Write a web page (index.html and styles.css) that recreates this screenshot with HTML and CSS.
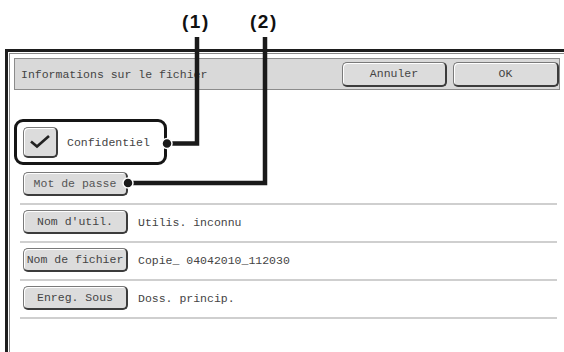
FILE: index.html
```html
<!DOCTYPE html>
<html>
<head>
    <title>Informations sur le fichier</title>
    <link rel="stylesheet" href="styles.css">
</head>
<body>
    <div class="page">
        <div class="callouts">
            <span class="callout c1">(1)</span>
            <span class="callout c2">(2)</span>
            <svg class="leaders" width="564" height="352" viewBox="0 0 564 352">
                <path d="M167 143.5 H197 V37" />
                <path d="M128 183 H265 V37" />
                <circle cx="167" cy="143.5" r="5" />
                <circle cx="128" cy="183" r="5" />
            </svg>
        </div>
        <div class="frame">
            <div class="panel">
                <div class="titlebar">
                    <span class="title">Informations sur le fichier</span>
                    <div class="actions">
                        <button class="key key-wide">Annuler</button>
                        <button class="key key-wide ok">OK</button>
                    </div>
                </div>
                <div class="content">
                    <div class="confidential">
                        <button class="key checkbox">
                            <svg width="22" height="15" viewBox="0 0 22 15">
                                <polyline points="2,7.5 8,12.5 20,2" />
                            </svg>
                        </button>
                        <span>Confidentiel</span>
                    </div>
                    <button class="key field-key password">Mot de passe</button>
                    <ul class="rows">
                        <li><button class="key field-key">Nom d'util.</button><span>Utilis. inconnu</span></li>
                        <li><button class="key field-key">Nom de fichier</button><span>Copie_ 04042010_112030</span></li>
                        <li><button class="key field-key">Enreg. Sous</button><span>Doss. princip.</span></li>
                    </ul>
                </div>
            </div>
        </div>
    </div>
</body>
</html>
```

FILE: styles.css
```css
body {
    margin: 0;
    background-color: white;
    color: #444;
    font-family: "Liberation Mono", "Courier New", monospace;
    font-size: 11.5px;
}
.page {
    position: relative;
    width: 564px;
    height: 352px;
    overflow: hidden;
}
.callouts {
    height: 49px;
}
.callout {
    position: absolute;
    top: 11px;
    font-family: "Liberation Sans", Arial, sans-serif;
    font-weight: bold;
    font-size: 19px;
    letter-spacing: 1.5px;
    color: #111;
}
.c1 {
    left: 182px;
}
.c2 {
    left: 250px;
}
.leaders {
    position: absolute;
    left: 0;
    top: 0;
    z-index: 2;
    pointer-events: none;
}
.leaders path {
    fill: none;
    stroke: #1a1a1a;
    stroke-width: 4.5;
}
.leaders circle {
    fill: #1a1a1a;
    stroke: white;
    stroke-width: 1.5;
}
.frame {
    margin-left: 5px;
    height: 310px;
    border-top: 3px solid #1e1e1e;
    border-left: 3px solid #1e1e1e;
}
.panel {
    margin: 1px 0 0 1px;
    height: 100%;
    box-sizing: border-box;
    border-top: 1px solid #8a8a8a;
    border-left: 1px solid #8a8a8a;
    padding: 4px 4px 0 4px;
}
.titlebar {
    display: flex;
    align-items: center;
    justify-content: space-between;
    height: 32px;
    box-sizing: border-box;
    border: 1px solid #8c8c8c;
    background-color: #d9d9d9;
    padding: 0 0 0 6px;
}
.actions {
    display: flex;
    gap: 6px;
}
.key {
    font-family: inherit;
    font-size: 11.5px;
    color: #444;
    background-color: #dcdcdc;
    border: 1px solid #7a7a7a;
    border-right: 2px solid #3c3c3c;
    border-bottom: 2px solid #3c3c3c;
    border-radius: 5px;
    box-shadow: inset 1px 1px 0 white;
    padding: 0;
    box-sizing: border-box;
}
.key-wide {
    width: 105px;
    height: 25px;
}
.ok {
    width: 106px;
}
.content {
    padding-top: 29px;
}
.confidential {
    display: flex;
    align-items: center;
    gap: 9px;
    width: 153px;
    height: 46px;
    box-sizing: border-box;
    border: 3px solid #151515;
    border-radius: 9px;
    padding-left: 6px;
}
.checkbox {
    display: flex;
    align-items: center;
    justify-content: center;
    width: 35px;
    height: 31px;
}
.checkbox polyline {
    fill: none;
    stroke: #222;
    stroke-width: 2.6;
}
.field-key {
    width: 105px;
    height: 24px;
    white-space: nowrap;
}
.password {
    display: block;
    margin: 7px 0 0 9px;
    color: #555;
}
.rows {
    list-style-type: none;
    margin: 7px 0 0 6px;
    padding: 0;
    width: 537px;
    border-bottom: 2px solid #cfcfcf;
}
.rows li {
    display: flex;
    align-items: center;
    gap: 10px;
    border-top: 2px solid #cfcfcf;
    padding: 5px 0 7px 3px;
}
```
